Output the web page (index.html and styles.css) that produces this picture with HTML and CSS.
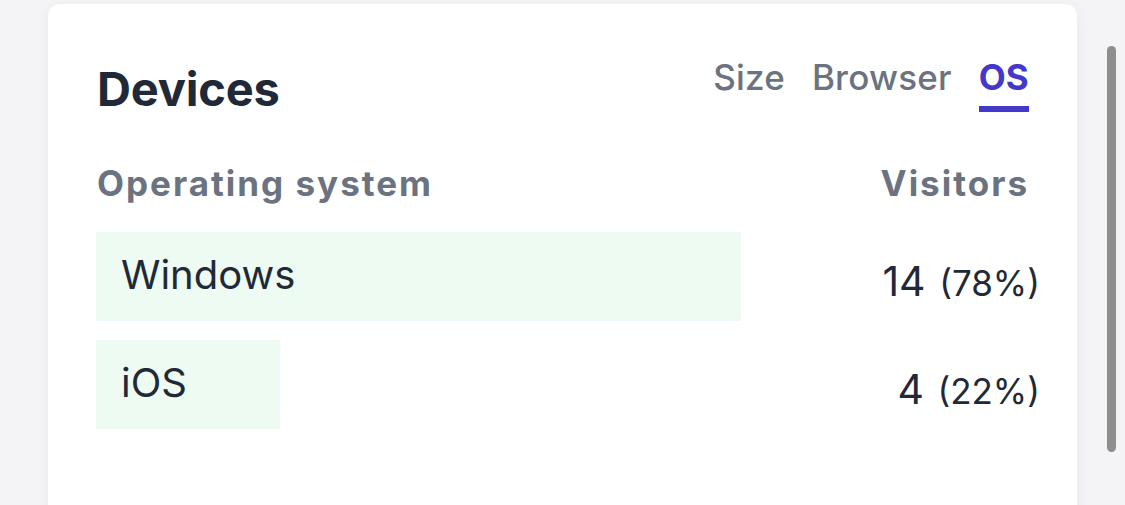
FILE: index.html
```html
<!DOCTYPE html>
<html>
<head>
<meta charset="utf-8">
<link rel="stylesheet" href="styles.css">
</head>
<body>
<div class="page">
  <section class="card">
    <header class="card-head">
      <h2 class="title">Devices</h2>
      <nav class="tabs">
        <span class="tab">Size</span>
        <span class="tab">Browser</span>
        <span class="tab active">OS</span>
      </nav>
    </header>
    <div class="cols">
      <span>Operating system</span>
      <span>Visitors</span>
    </div>
    <div class="rows">
      <div class="row">
        <div class="bar-wrap">
          <div class="bar" style="width:645px"></div>
          <span class="label">Windows</span>
        </div>
        <div class="value">14 <small>(78%)</small></div>
      </div>
      <div class="row">
        <div class="bar-wrap">
          <div class="bar" style="width:184px"></div>
          <span class="label">iOS</span>
        </div>
        <div class="value">4 <small>(22%)</small></div>
      </div>
    </div>
  </section>
  <div class="scrollbar"></div>
</div>
</body>
</html>
```
FILE: styles.css
```css
* { box-sizing: border-box; }
html, body { margin: 0; padding: 0; }
body {
  background: #f4f4f6;
  font-family: Inter, "Noto Sans", sans-serif;
  overflow: hidden;
  height: 505px;
}
.page {
  position: relative;
  height: 505px;
  overflow: hidden;
  padding: 4px 0 0 48px;
}
.card {
  width: 1029px;
  height: 540px;
  background: #ffffff;
  border-radius: 12px;
  box-shadow: 0 2px 14px rgba(0, 0, 0, 0.05);
  padding: 0 48px 0 49px;
}
.card-head {
  display: flex;
  justify-content: space-between;
  align-items: flex-start;
  padding-top: 56px;
}
.title {
  margin: 0;
  font-size: 47px;
  font-weight: 700;
  line-height: 58px;
  color: #1f2937;
  letter-spacing: -0.2px;
}
.tabs {
  display: flex;
  gap: 27px;
  margin-top: -9px;
}
.tab {
  font-size: 35px;
  line-height: 52px;
  color: #6b7280;
  font-weight: 500;
  letter-spacing: 0.2px;
  padding-bottom: 3px;
  border-bottom: 6px solid transparent;
}
.tab.active {
  color: #4338ca;
  font-weight: 700;
  border-bottom-color: #4338ca;
}
.cols {
  display: flex;
  justify-content: space-between;
  margin-top: 43px;
  font-size: 35px;
  line-height: 44px;
  font-weight: 700;
  color: #6b7280;
  letter-spacing: 2px;
}
.rows {
  display: flex;
  flex-direction: column;
  gap: 19px;
  margin-top: 27px;
  margin-left: -1px;
  margin-right: -11px;
}
.row {
  display: flex;
  align-items: center;
  justify-content: space-between;
  height: 89px;
}
.bar-wrap {
  position: relative;
  flex: 1;
  height: 100%;
  display: flex;
  align-items: center;
}
.bar {
  position: absolute;
  left: 0;
  top: 0;
  height: 100%;
  background: #edfbf3;
}
.label {
  position: relative;
  padding-left: 25px;
  padding-bottom: 4px;
  font-size: 40px;
  color: #1f2937;
}
.value {
  font-size: 41px;
  font-weight: 400;
  color: #1f2937;
  padding-top: 8px;
}
.value small {
  font-size: 35px;
  font-weight: 400;
  margin-left: 2px;
}
.scrollbar {
  position: absolute;
  left: 1107px;
  top: 46px;
  width: 9px;
  height: 406px;
  border-radius: 5px;
  background: #8e8e8e;
}
```
